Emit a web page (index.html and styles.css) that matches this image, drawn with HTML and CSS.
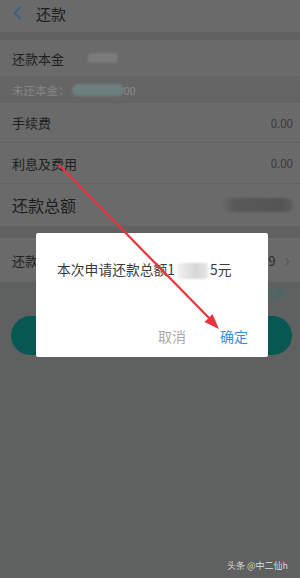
FILE: index.html
```html
<!DOCTYPE html>
<html lang="zh">
<head>
<meta charset="utf-8">
<title>还款</title>
<link rel="stylesheet" href="styles.css">
</head>
<body>
<div class="screen">
  <header class="topbar">
    <svg class="back" width="10" height="14" viewBox="0 0 10 14"><path d="M8 1.5 L2.5 7 L8 12.5" fill="none" stroke="#3c6188" stroke-width="2.2" stroke-linecap="round" stroke-linejoin="round"/></svg>
    <span class="title">还款</span>
  </header>
  <div class="band"></div>
  <section class="card">
    <div class="row row-principal"><span class="label">还款本金</span><span class="smudge smudge-gray"></span></div>
    <div class="row row-sub"><span class="sub-label">未还本金：</span><span class="smudge smudge-teal"></span><span class="sub-tail">00</span></div>
    <div class="row row-line"><span class="label">手续费</span><span class="value">0.00</span></div>
    <div class="row row-line"><span class="label">利息及费用</span><span class="value">0.00</span></div>
    <div class="row row-total"><span class="label-big">还款总额</span><span class="smudge smudge-dark"></span></div>
  </section>
  <div class="band band-lg"></div>
  <div class="row row-repay"><span class="label">还款账户</span><span class="repay-right"><span class="value value-repay">6789</span><span class="chev">&#x203A;</span></span></div>
  <div class="note"><span>查看还款说明</span></div>
  <div class="btn-wrap"><div class="btn"></div></div>
</div>

<div class="dialog">
  <p class="msg">本次申请还款总额1<span class="smudge smudge-light"></span>5元</p>
  <div class="actions"><span class="cancel">取消</span><span class="ok">确定</span></div>
</div>

<svg class="arrow" width="300" height="578" viewBox="0 0 300 578">
  <line x1="59" y1="165" x2="212" y2="321" stroke="#e8343c" stroke-width="2.2" stroke-linecap="round"/>
  <polygon points="219,329 204.5,322 212.5,314" fill="#e8343c"/>
</svg>

<div class="watermark">头条 @中二仙h</div>
</body>
</html>
```

FILE: styles.css
```css
* { box-sizing: border-box; }
html, body { margin: 0; padding: 0; }
body {
  width: 300px;
  height: 578px;
  overflow: hidden;
  position: relative;
  background: #5f6160;
  font-family: "Noto Sans CJK SC", "Noto Sans", sans-serif;
  color: #1f1f1f;
}
.screen { display: flex; flex-direction: column; }
.topbar {
  height: 32px;
  background: #6a6a6a;
  display: flex;
  align-items: center;
  padding-left: 12px;
  padding-bottom: 6px;
}
.back { margin-right: 14px; }
.title { font-size: 15px; color: #1e1e1e; }
.band { height: 8px; background: #616161; }
.band-lg { height: 12px; }
.card { display: flex; flex-direction: column; background: #6a6a6a; }
.row {
  display: flex;
  align-items: center;
  padding: 0 7px 0 12px;
  background: #6a6a6a;
}
.row-principal { height: 37px; border-bottom: 1px solid #646464; }
.row-sub { height: 25px; background: #656565; }
.row-line { height: 40px; border-top: 1px solid #636363; justify-content: space-between; }
.row-line + .row-line { height: 41px; }
.row-total { height: 43px; border-top: 1px solid #636363; justify-content: space-between; }
.label { font-size: 13px; color: #1f1f1f; }
.label-big { font-size: 16px; color: #1c1c1c; }
.value { font-size: 11.5px; color: #3a3a3a; }
.value-repay { font-size: 13px; color: #2a2a2a; }
.sub-label { font-size: 11.5px; color: #858585; }
.sub-tail { font-size: 11px; color: #8a8a8a; }
.smudge { display: inline-block; border-radius: 3px; filter: blur(1.2px); }
.smudge-gray { width: 30px; height: 10px; background: #7b7b7b; margin-left: 24px; }
.smudge-teal { width: 52px; height: 12px; background: #6e807d; margin-left: 2px; border-radius: 6px; }
.smudge-dark { width: 70px; height: 14px; background: linear-gradient(90deg, #676767 0, #595959 18%, #545454 85%, #5e5e5e 100%); border-radius: 7px; }
.smudge-light { width: 31px; height: 16px; background: linear-gradient(90deg, #f2f2f2, #d6d6d6 60%, #e6e6e6); vertical-align: middle; margin: 0 2px; filter: blur(1px); }
.row-repay { height: 44px; justify-content: space-between; }
.repay-right { display: flex; align-items: center; gap: 9px; padding-right: 3px; }
.chev { font-size: 18px; color: #555; line-height: 1; margin-top: -2px; }
.note {
  display: flex;
  justify-content: flex-end;
  padding: 0 15px 0 0;
  height: 22px;
  align-items: center;
  font-size: 12px;
  color: #3d6b68;
}
.btn-wrap { padding: 12px 8px 0 11px; }
.btn {
  height: 39px;
  border-radius: 20px;
  background: #075753;
}
.dialog {
  position: absolute;
  left: 36px;
  top: 233px;
  width: 232px;
  height: 124px;
  background: #fff;
  border-radius: 2px;
  padding: 26px 20px 0 21px;
}
.msg { margin: 0; font-size: 13.8px; color: #3a3a3a; line-height: 20px; white-space: nowrap; }
.actions {
  display: flex;
  justify-content: flex-end;
  gap: 34px;
  margin-top: 47px;
  font-size: 14px;
}
.cancel { color: #aaaaaa; }
.ok { color: #3a8fe0; }
.arrow { position: absolute; left: 0; top: 0; pointer-events: none; }
.watermark {
  position: absolute;
  right: 12px;
  bottom: 6px;
  font-size: 9px;
  color: #e6e6e6;
  text-shadow: 0 0 1px #333;
}
```
